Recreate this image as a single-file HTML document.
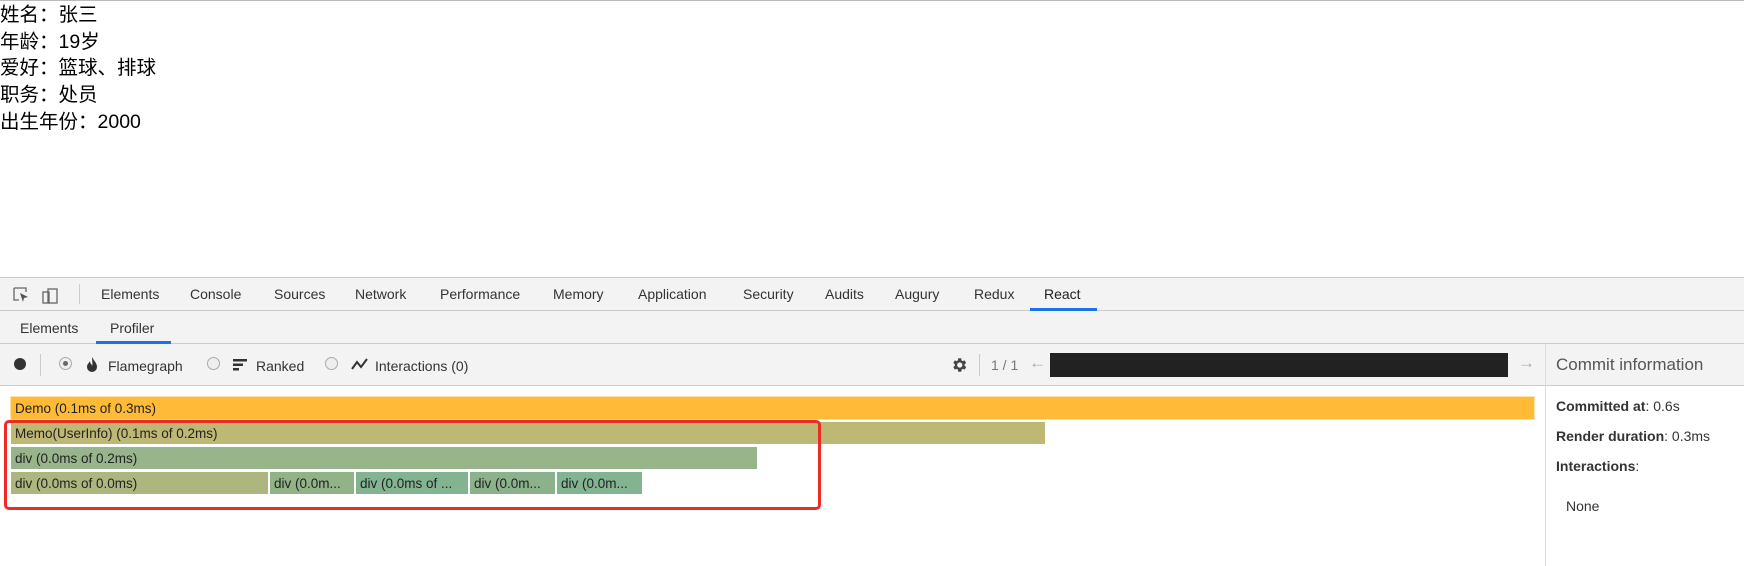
<!DOCTYPE html>
<html><head><meta charset="utf-8"><style>
*{margin:0;padding:0;box-sizing:border-box}
body{width:1744px;height:566px;position:relative;overflow:hidden;background:#fff;font-family:"Liberation Sans","Noto Sans CJK SC",sans-serif;}
.a{position:absolute;white-space:nowrap}
.info{font-size:19.5px;color:#000;line-height:26.7px;left:0}
.tab{font-size:14px;color:#333;top:286px}
.bar{position:absolute;height:24px;font-size:13.5px;color:#222;line-height:24px;padding-left:4px;overflow:hidden;white-space:nowrap;border:1px solid #fff}
.rt{font-size:14px;color:#333}
.radio{position:absolute;width:13px;height:13px;border:1px solid #aaa;border-radius:50%;background:#eee}
</style></head><body>
<div class="a" style="top:0;left:0;width:1744px;height:1px;background:#bbb"></div>
<div class="a info" style="top:2px">姓名：张三</div>
<div class="a info" style="top:29px">年龄：19岁</div>
<div class="a info" style="top:55px">爱好：篮球、排球</div>
<div class="a info" style="top:82px">职务：处员</div>
<div class="a info" style="top:109px">出生年份：2000</div>

<div class="a" style="top:277px;left:0;width:1744px;height:34px;background:#f3f3f3;border-top:1px solid #ccc;border-bottom:1px solid #ccc"></div>
<svg class="a" style="left:12px;top:285px" width="56" height="20"><path d="M2 3h12v4M2 3v12h5" fill="none" stroke="#666" stroke-width="1.3"/><path d="M8 8l8 4-4 1-1 4z" fill="#555"/><rect x="36" y="4" width="9" height="14" fill="none" stroke="#666" stroke-width="1.3"/><rect x="31" y="7" width="6" height="11" fill="none" stroke="#666" stroke-width="1.3"/></svg>
<div class="a" style="left:79px;top:284px;width:1px;height:20px;background:#ccc"></div>
<div class="a tab" style="left:101px">Elements</div>
<div class="a tab" style="left:190px">Console</div>
<div class="a tab" style="left:274px">Sources</div>
<div class="a tab" style="left:355px">Network</div>
<div class="a tab" style="left:440px">Performance</div>
<div class="a tab" style="left:553px">Memory</div>
<div class="a tab" style="left:638px">Application</div>
<div class="a tab" style="left:743px">Security</div>
<div class="a tab" style="left:825px">Audits</div>
<div class="a tab" style="left:895px">Augury</div>
<div class="a tab" style="left:974px">Redux</div>
<div class="a tab" style="left:1044px;color:#222">React</div>
<div class="a" style="left:1030px;top:308px;width:67px;height:3px;background:#1a73e8"></div>

<div class="a" style="top:311px;left:0;width:1744px;height:33px;background:#f3f3f3;border-bottom:1px solid #ccc"></div>
<div class="a tab" style="left:20px;top:320px">Elements</div>
<div class="a tab" style="left:110px;top:320px">Profiler</div>
<div class="a" style="left:96px;top:341px;width:75px;height:3px;background:#1a73e8"></div>

<div class="a" style="top:344px;left:0;width:1545px;height:42px;background:#f3f3f3;border-bottom:1px solid #ccc"></div>
<div class="a" style="top:344px;left:1545px;width:199px;height:42px;background:#f3f3f3;border-bottom:1px solid #ccc;border-left:1px solid #ddd"></div>
<div class="a" style="left:14px;top:358px;width:12px;height:12px;border-radius:50%;background:#333"></div>
<div class="a" style="left:40px;top:354px;width:1px;height:22px;background:#ccc"></div>
<div class="radio" style="left:59px;top:357px"><div style="width:5px;height:5px;border-radius:50%;background:#666;margin:3px"></div></div>
<svg class="a" style="left:86px;top:357px" width="12" height="15"><path d="M6 0C8 4 11 6 11 10a5 5 0 0 1-10 0c0-3 2-4 3-6 0 3 2 3 2 5 1-2 0-5 0-9z" fill="#333"/></svg>
<div class="a rt" style="left:108px;top:358px">Flamegraph</div>
<div class="radio" style="left:207px;top:357px"></div>
<svg class="a" style="left:233px;top:359px" width="14" height="12"><rect x="0" y="0" width="14" height="2.5" fill="#333"/><rect x="0" y="4.5" width="10" height="2.5" fill="#333"/><rect x="0" y="9" width="6" height="2.5" fill="#333"/></svg>
<div class="a rt" style="left:256px;top:358px">Ranked</div>
<div class="radio" style="left:325px;top:357px"></div>
<svg class="a" style="left:351px;top:358px" width="18" height="12"><path d="M1 11l5-7 4 5 6-8" fill="none" stroke="#333" stroke-width="2"/></svg>
<div class="a rt" style="left:375px;top:358px">Interactions (0)</div>
<svg class="a" style="left:950px;top:356px" width="18" height="18" viewBox="0 0 24 24"><path fill="#444" d="M19.4 13a7.5 7.5 0 0 0 0-2l2.1-1.6-2-3.5-2.5 1a7 7 0 0 0-1.7-1L15 3h-4l-.4 2.9a7 7 0 0 0-1.7 1l-2.5-1-2 3.5L6.5 11a7.5 7.5 0 0 0 0 2l-2.1 1.6 2 3.5 2.5-1a7 7 0 0 0 1.7 1L11 21h4l.4-2.9a7 7 0 0 0 1.7-1l2.5 1 2-3.5zM13 15.5a3.5 3.5 0 1 1 0-7 3.5 3.5 0 0 1 0 7z"/></svg>
<div class="a" style="left:979px;top:354px;width:1px;height:22px;background:#ccc"></div>
<div class="a rt" style="left:991px;top:357px;color:#777">1 / 1</div>
<div class="a" style="left:1029px;top:353px;font-size:17px;color:#aaa">←</div>
<div class="a" style="left:1050px;top:353px;width:458px;height:24px;background:#222"></div>
<div class="a" style="left:1518px;top:353px;font-size:17px;color:#aaa">→</div>
<div class="a" style="left:1556px;top:355px;font-size:17px;color:#555">Commit information</div>

<div class="bar" style="left:10px;top:396px;width:1525px;background:#ffbb38;border-color:#ffe3a8">Demo (0.1ms of 0.3ms)</div>
<div class="bar" style="left:10px;top:421px;width:1036px;background:#bdb874">Memo(UserInfo) (0.1ms of 0.2ms)</div>
<div class="bar" style="left:10px;top:446px;width:748px;background:#98b48a">div (0.0ms of 0.2ms)</div>
<div class="bar" style="left:10px;top:471px;width:259px;background:#adb67e">div (0.0ms of 0.0ms)</div>
<div class="bar" style="left:269px;top:471px;width:86px;background:#92b388">div (0.0m...</div>
<div class="bar" style="left:355px;top:471px;width:114px;background:#83b492">div (0.0ms of ...</div>
<div class="bar" style="left:469px;top:471px;width:87px;background:#8cb28c">div (0.0m...</div>
<div class="bar" style="left:556px;top:471px;width:87px;background:#83b492">div (0.0m...</div>
<div class="a" style="left:4px;top:420px;width:817px;height:90px;border:3px solid #ee2a24;border-radius:5px"></div>

<div class="a" style="left:1545px;top:386px;width:1px;height:180px;background:#ddd"></div>
<div class="a rt" style="left:1556px;top:398px"><b>Committed at</b>: 0.6s</div>
<div class="a rt" style="left:1556px;top:428px"><b>Render duration</b>: 0.3ms</div>
<div class="a rt" style="left:1556px;top:458px"><b>Interactions</b>:</div>
<div class="a rt" style="left:1566px;top:498px">None</div>
</body></html>
